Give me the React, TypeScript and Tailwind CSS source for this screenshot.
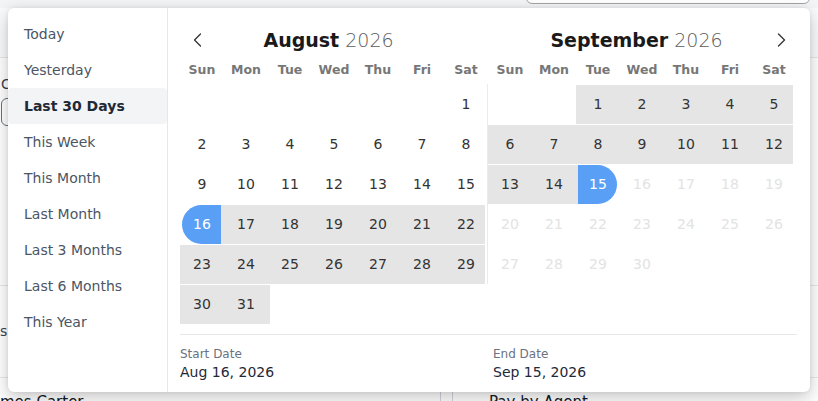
import React from "react"

type Day = { n: number; state: "none" | "range" | "start" | "end" | "off" }

const presets = [
  "Today",
  "Yesterday",
  "Last 30 Days",
  "This Week",
  "This Month",
  "Last Month",
  "Last 3 Months",
  "Last 6 Months",
  "This Year",
]

const weekdays = ["Sun", "Mon", "Tue", "Wed", "Thu", "Fri", "Sat"]

// August 2026 starts on a Saturday, September on a Tuesday
function buildMonth(offset: number, total: number, stateOf: (n: number) => Day["state"]) {
  const cells: (Day | null)[] = []
  for (let i = 0; i < offset; i++) cells.push(null)
  for (let n = 1; n <= total; n++) cells.push({ n, state: stateOf(n) })
  return cells
}

const august = buildMonth(6, 31, (n) => (n === 16 ? "start" : n > 16 ? "range" : "none"))
const september = buildMonth(2, 30, (n) => (n === 15 ? "end" : n < 15 ? "range" : "off"))

function Chevron({ dir }: { dir: "left" | "right" }) {
  return (
    <svg width="9" height="14" viewBox="0 0 9 14" fill="none" stroke="#333" strokeWidth={1.3} strokeLinecap="round" strokeLinejoin="round">
      {dir === "left" ? <path d="M7.5 1L1.5 7l6 6" /> : <path d="M1.5 1l6 6-6 6" />}
    </svg>
  )
}

function DayCell({ day, index, total }: { day: Day | null; index: number; total: number }) {
  if (!day) return <div className="h-10 w-11" />
  const isSat = index % 7 === 6
  const isLast = day.n === total
  return (
    <div className="relative flex h-10 w-11 items-center justify-center">
      {day.state === "range" && (
        <span
          className={`absolute top-px bottom-0 left-0 bg-[#e5e5e5] ${
            isSat ? "right-[3px]" : isLast ? "-right-[2px]" : "right-0"
          }`}
        />
      )}
      {day.state === "start" && (
        <>
          <span className={`absolute top-px bottom-0 left-5 bg-[#e5e5e5] ${isSat ? "right-[3px]" : "right-0"}`} />
          <span className="absolute top-px bottom-0 left-[2px] w-[39px] rounded-l-full bg-[#599ff6]" />
        </>
      )}
      {day.state === "end" && (
        <>
          <span className="absolute top-px bottom-0 left-0 right-5 bg-[#e5e5e5]" />
          <span className="absolute top-px bottom-0 left-[2px] w-[39px] rounded-r-full bg-[#599ff6]" />
        </>
      )}
      <span
        className={`relative text-[14px] ${
          day.state === "start" || day.state === "end"
            ? "text-white"
            : day.state === "off"
            ? "text-[#e3e3e3]"
            : "text-[#333]"
        }`}
      >
        {day.n}
      </span>
    </div>
  )
}

function Month({
  name,
  cells,
  total,
  nav,
  divider,
}: {
  name: string
  cells: (Day | null)[]
  total: number
  nav: "left" | "right"
  divider?: boolean
}) {
  return (
    <div className="w-[308px]">
      <div className="grid h-12 items-center pt-4">
        <div className="[grid-area:1/1] pr-[11px] text-center text-[19px] leading-7 text-[#1a1a1a]">
          <span className="font-bold">{name}</span> <span className="font-light text-[#5c5c5c]">2026</span>
        </div>
        <button
          className={`[grid-area:1/1] flex h-6 w-4 items-center justify-center ${
            nav === "left" ? "ml-[9px] justify-self-start" : "mr-[7px] justify-self-end"
          }`}
        >
          <Chevron dir={nav} />
        </button>
      </div>
      <div className="grid h-7 grid-cols-7 items-center">
        {weekdays.map((w) => (
          <div key={w} className="text-center text-[12.5px] font-bold text-[#777]">
            {w}
          </div>
        ))}
      </div>
      <div className={`grid grid-cols-7 ${divider ? "-ml-px border-l border-[#ebebeb]" : ""}`}>
        {cells.map((d, i) => (
          <DayCell key={i} day={d} index={i} total={total} />
        ))}
      </div>
    </div>
  )
}

export default function App() {
  return (
    <div className="relative h-[401px] w-[818px] overflow-hidden bg-white font-['DejaVu_Sans',sans-serif]">
      {/* page behind the popover */}
      <div className="flex h-full flex-col">
        <div className="flex h-2 shrink-0 justify-end bg-[#f3f4f6] pr-2">
          <div className="-mt-[26px] h-[30px] w-[284px] rounded-md border border-[#a3a3a3] bg-white" />
        </div>
        <div className="h-[50px] shrink-0 border-b border-[#e5e7eb] bg-[#f9fafb]" />
        <div className="flex h-[228px] shrink-0 flex-col border-b border-[#e5e7eb] pt-[18px] pl-[1px]">
          <span className="text-[14px] leading-4 text-[#374151]">C</span>
          <div className="mt-[6px] h-[28px] w-[200px] rounded-md border border-[#6b7280]" />
        </div>
        <div className="flex h-[92px] shrink-0 items-center border-b border-[#e5e7eb] text-[14px] text-[#374151]">
          s
        </div>
        <div className="flex shrink-0">
          <div className="w-[441px] border-r border-[#d1d5db] pt-[14px] text-[15px] leading-5 text-[#111827]">
            mes Carter
          </div>
          <div className="w-3 border-r border-[#d1d5db]" />
          <div className="pt-[14px] pl-[36px] text-[15px] leading-5 text-[#111827]">Pay by Agent</div>
        </div>
      </div>

      {/* date range popover */}
      <div className="absolute top-2 left-2 flex h-[384px] w-[802px] rounded-md bg-white shadow-[0_6px_18px_rgba(0,0,0,0.22),0_0_4px_rgba(0,0,0,0.08)]">
        <div className="w-[160px] shrink-0 border-r border-[#e5e7eb] py-2">
          {presets.map((p) => (
            <div
              key={p}
              className={`flex h-9 items-center rounded px-4 text-[14px] ${
                p === "Last 30 Days" ? "bg-[#f3f4f6] font-bold text-[#1f2937]" : "text-[#4b5563]"
              }`}
            >
              {p}
            </div>
          ))}
        </div>
        <div className="flex flex-1 flex-col pr-[14px] pl-3">
          <div className="flex h-[316px]">
            <Month name="August" cells={august} total={31} nav="left" />
            <Month name="September" cells={september} total={30} nav="right" divider />
          </div>
          <div className="mt-[10px] mr-[-1px] flex border-t border-[#e5e7eb] pt-[11px]">
            <div className="w-[313px]">
              <div className="text-[12px] leading-4 text-[#6b7280]">Start Date</div>
              <div className="text-[14px] leading-5 text-[#1f2937]">Aug 16, 2026</div>
            </div>
            <div>
              <div className="text-[12px] leading-4 text-[#6b7280]">End Date</div>
              <div className="text-[14px] leading-5 text-[#1f2937]">Sep 15, 2026</div>
            </div>
          </div>
        </div>
      </div>
    </div>
  )
}
